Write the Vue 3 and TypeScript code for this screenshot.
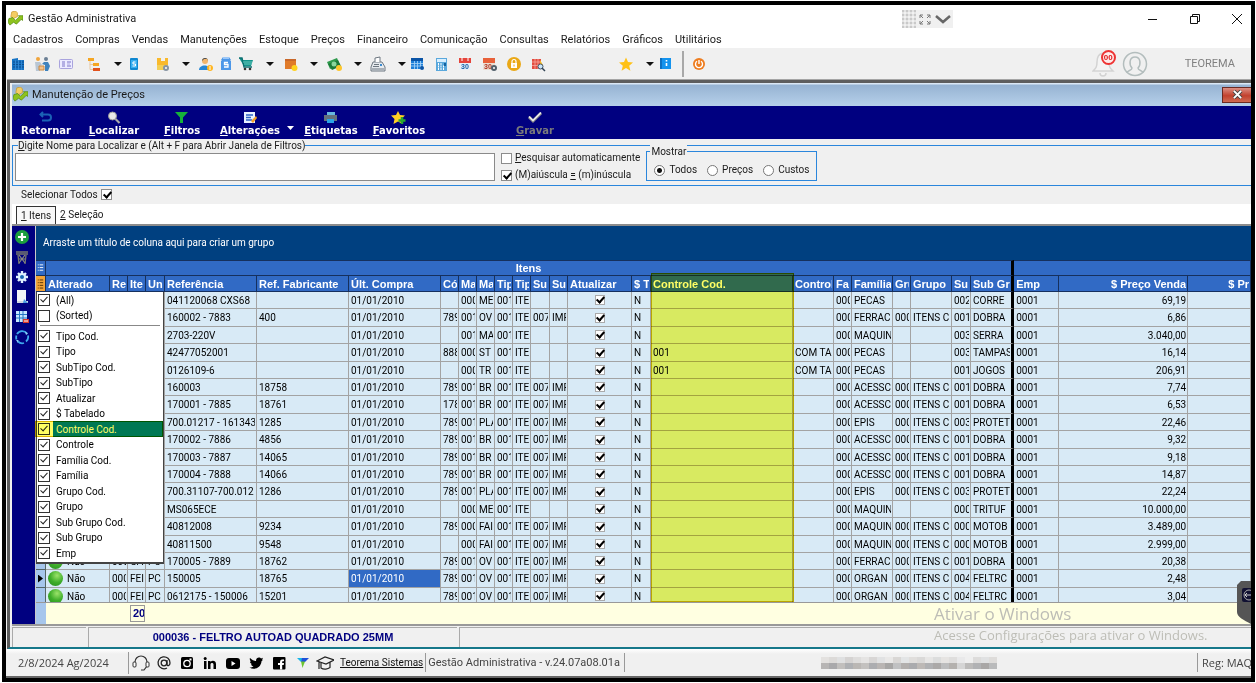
<script setup lang="ts">
import { ref } from 'vue'

interface Tool { label: string; gap: 'a' | 'b' | 'c' | 'far'; kind?: 'arrow' | 'sep'; art?: string }
interface Column { key: string; title: string; width: number; type?: 'check' | 'state' | 'mark' | 'right' }

const menus = ['Cadastros', 'Compras', 'Vendas', 'Manutenções', 'Estoque', 'Preços', 'Financeiro', 'Comunicação', 'Consultas', 'Relatórios', 'Gráficos', 'Utilitários']

const arrow = (label: string, gap: Tool['gap']): Tool => ({ label, gap, kind: 'arrow' })

const tools: Tool[] = [
  { label: 'Empresas', gap: 'a', art: '<path d="M2 3l6-1v2h6v10H2z" fill="#1673c4"/><path d="M3 6h11M3 8.500h11M3 11h11" stroke="#0b4f93"/><path d="M5.500 4v10M8.500 4v10M11.500 4v10" stroke="#2f86d2"/>' },
  { label: 'Clientes', gap: 'b', art: '<circle cx="4" cy="3" r="2" fill="#f0a43c"/><circle cx="12" cy="3" r="2" fill="#6b7f94"/><path d="M1 6h5l2 3-2 1v5H2z" fill="#b9c6d3"/><path d="M10 6h4l2 4-2 5h-3V9L8 8z" fill="#3f83bd"/><path d="M5 10h5v4H5z" fill="#f5c188" stroke="#c98a45"/>' },
  { label: 'Cartões', gap: 'b', art: '<rect x="1.500" y="3.500" width="13" height="9" rx="1" fill="#ecebff" stroke="#a9a3dd"/><path d="M4 6h3M4 8h3M4 10h3M9 6h4M9 10h4" stroke="#7a72c7"/><path d="M9 8h3" stroke="#a9a3dd"/>' },
  { label: 'Categorias', gap: 'c', art: '<path d="M2 2h6v3H2z" fill="#f5a623"/><path d="M7 7h6v3H7z" fill="#f5a623"/><path d="M7 12h7v3H7z" fill="#e2521d"/><path d="M4 5v3.500h3M4 8v5.500h3" fill="none" stroke="#e9c9a0"/>' },
  arrow('Mais categorias', 'c'),
  { label: 'Pagamento', gap: 'a', art: '<rect x="4" y="2" width="8" height="12" rx="1" fill="#0f87d0"/><rect x="5" y="4" width="6" height="8" fill="#36aef0"/><path d="M9.500 6H7v2h2.500v2H6.500" fill="none" stroke="#fff"/>' },
  { label: 'Produtos', gap: 'c', art: '<path d="M3 2h4v3h4V2h3v9H3z" fill="#f9b92c"/><path d="M3 9h11v5H3z" fill="#f3cf55"/><circle cx="12" cy="12" r="3" fill="#8795a3"/><circle cx="12" cy="12" r="1" fill="#fff"/>' },
  arrow('Mais produtos', 'c'),
  { label: 'Vendedor', gap: 'b', art: '<circle cx="7" cy="5" r="3" fill="#f2b56b"/><path d="M4 5c0-4 6-4 6 0L9 3H6z" fill="#3b4754"/><path d="M1 14c0-6 11-6 11 0z" fill="#2787d5"/><circle cx="12" cy="12" r="3" fill="#ffb51f"/><path d="M12 10v4" stroke="#fff"/>' },
  { label: 'Contas', gap: 'a', art: '<path d="M5 1h6l2 3-1 1h1v9H3V5h1L3 4z" fill="#4c97e8"/><path d="M5 1h6v2H5z" fill="#9cc7f7"/><path d="M10 6.500H6.500v2H10v2.500H6" fill="none" stroke="#fff" stroke-width="1.300"/>' },
  { label: 'Carrinho', gap: 'a', art: '<path d="M1 2h3l1 2h10l-2 6H6z" fill="#12948b"/><path d="M1 2h3l2 9h8" fill="none" stroke="#0b6e70" stroke-width="1.400"/><path d="M5 6h9M6 8h8" stroke="#68c7bd"/><circle cx="7" cy="13" r="1.300" fill="#333"/><circle cx="12" cy="13" r="1.300" fill="#333"/>' },
  arrow('Mais vendas', 'c'),
  { label: 'Estoque', gap: 'b', art: '<path d="M3 3h11v10H3z" fill="#e07b2a"/><path d="M3 3h11v2H3z" fill="#c9682a"/><circle cx="12.500" cy="12" r="3" fill="#ffd21f"/>' },
  arrow('Mais estoque', 'c'),
  { label: 'Financeiro', gap: 'b', art: '<path d="M1 6l10-4 3 7-10 4z" fill="#2f9a4d"/><path d="M2 8l10-4 3 6-9 4z" fill="#1d7a39"/><circle cx="8" cy="8" r="2.500" fill="#8bd69d"/><circle cx="13" cy="12" r="3" fill="#ffc62b"/>' },
  arrow('Mais financeiro', 'c'),
  { label: 'Caixa', gap: 'b', art: '<path d="M3 6h9l3 5v4H1v-4z" fill="#e6eaee" stroke="#6d7780"/><path d="M5 6V2l5-1v5" fill="#fff" stroke="#6d7780"/><path d="M4 8.500h5M3 10.500h6M2 13h12" stroke="#6d7780"/><path d="M10 8h2v2h-2z" fill="#3b8bd0"/>' },
  arrow('Mais caixa', 'c'),
  { label: 'Tabela', gap: 'a', art: '<path d="M1 3h12v10H1z" fill="#1e7fd8"/><path d="M1 2h12v3H1z" fill="#0a54a6"/><path d="M1 7.500h12M1 10h12M4.500 5v8M7.500 5v8M10.500 5v8" stroke="#a9d4f8" stroke-width=".8"/><circle cx="12" cy="12" r="2" fill="#0a54a6"/>' },
  { label: 'Calculadora', gap: 'b', art: '<path d="M2 2h11v13H2z" fill="#5aa8dc"/><path d="M3 3h9v3H3z" fill="#d9efff"/><path d="M4 8h1M6.500 8h1M4 10.500h1M6.500 10.500h1M4 13h1M6.500 13h1M9 10.500h1M9 13h1" stroke="#fff" stroke-width="1.800"/><path d="M10 7h2v3h-2z" fill="#15629f"/>' },
  { label: 'Agenda', gap: 'b', art: '<path d="M1 2h12v12H1z" fill="#e8f0f7"/><path d="M1 2h12v5H1z" fill="#e5443a"/><path d="M4 1v4M10 1v4" stroke="#fff"/><text x="7" y="13" text-anchor="middle" font-family="Liberation Sans" font-weight="700" font-size="7" fill="#1561a8">30</text>' },
  { label: 'Configurar agenda', gap: 'b', art: '<path d="M1 2h12v12H1z" fill="#eadfd4"/><path d="M1 2h12v5H1z" fill="#e8613a"/><text x="6" y="13" text-anchor="middle" font-family="Liberation Sans" font-weight="700" font-size="7" fill="#b33420">30</text><circle cx="12" cy="12" r="3" fill="#52606b"/><circle cx="12" cy="12" r="1" fill="#fff"/>' },
  { label: 'Bloquear', gap: 'b', art: '<circle cx="8" cy="8" r="7" fill="#eaa817"/><path d="M5 7h6v5H5z" fill="#fff"/><path d="M6 7V5.500a2 2 0 0 1 4 0V7" fill="none" stroke="#fff" stroke-width="1.200"/><path d="M8 8.500v2" stroke="#eaa817"/>' },
  { label: 'Pesquisar', gap: 'b', art: '<path d="M2 3h9v10H2z" fill="#e34b3f"/><path d="M2 6h9M2 9.500h9M5 3v10M8 3v10" stroke="#f4a79f" stroke-width=".8"/><path d="M10 4l3 5h-3z" fill="#f8bc20"/><circle cx="10.500" cy="10.500" r="2.500" fill="#c9e4f7" stroke="#456"/><path d="M12 12l3 3" stroke="#345" stroke-width="1.500"/>' },
  { label: 'Favoritos', gap: 'far', art: '<path d="M8 1.500l2 4.500 5 .5-3.800 3.300 1.200 4.900L8 12l-4.400 2.700 1.200-4.900L1 6.500 6 6z" fill="#ffc114"/>' },
  arrow('Mais favoritos', 'c'),
  { label: 'Informações', gap: 'a', art: '<path d="M2 2h11v11H2z" fill="#1493ee"/><path d="M2 2h2v11H2z" fill="#0d6fc1"/><path d="M8.500 4v1.500M8.500 7v3" stroke="#fff" stroke-width="1.600"/>' },
  { label: '', gap: 'b', kind: 'sep' },
  { label: 'Sair', gap: 'b', art: '<circle cx="7" cy="8" r="6" fill="#ee7d20"/><path d="M5 5.300a3.500 3.500 0 1 0 4 0M7 4v4" fill="none" stroke="#fff" stroke-width="1.400"/>' },
]

const actions = [
  { first: 'R', rest: 'etornar', plain: true, art: '<path d="M3 3.500h7a3 3 0 0 1 0 6H4M5 1L2.500 3.500 5 6" fill="none" stroke="#1b62b5" stroke-width="2"/>' },
  { first: 'L', rest: 'ocalizar', art: '<circle cx="6.500" cy="5" r="4" fill="#e8e8e8" stroke="#9a9a9a"/><path d="M9.500 8l4 4" stroke="#aaa" stroke-width="2.200"/>' },
  { first: 'F', rest: 'iltros', art: '<path d="M1 1h13L9 6.500V12H6V6.500z" fill="#16b13a"/>' },
  { first: 'A', rest: 'lterações', art: '<path d="M2 1h11v11H2z" fill="#e9f2ff"/><path d="M4 4h7M4 6.500h5M4 9h6" stroke="#2d63c5" stroke-width="1.400"/><path d="M9 10l5-5 1 2-4 5z" fill="#f4a028"/>' },
  { first: 'E', rest: 'tiquetas', art: '<path d="M4 1h8v3H4z" fill="#67b7df"/><path d="M1 4h13v6H1z" fill="#65717d"/><path d="M4 8h7v4H4z" fill="#2aa3e8"/>' },
  { first: 'F', rest: 'avoritos', art: '<path d="M7 0l2 4 5 .5-3.500 3.300L11.500 13 7 10.500 2.500 13l1-5L0 4.500 5 4z" fill="#ffcf24"/><path d="M11 6v7M7.500 9.500h7" stroke="#28a82e" stroke-width="2.500"/>' },
  { first: 'G', rest: 'ravar', off: true, art: '<path d="M2 6l4 4 8-8" fill="none" stroke="#8c8c8c" stroke-width="3"/><path d="M2 5.500l4 4 8-8" fill="none" stroke="#f2f2f2" stroke-width="1.500"/>' },
]

const sideTools = [
  { label: 'Adicionar', art: '<circle cx="8" cy="8" r="7" fill="#1c9d3e"/><path d="M8 4v8M4 8h8" stroke="#fff" stroke-width="2.200"/>' },
  { label: 'Excluir', art: '<path d="M2 3h12M2 5h12M4 6l1 9M12 6l-1 9" fill="none" stroke="#77786e" stroke-width="1.300"/><path d="M5 6l6 8M11 6l-6 8M5 10h6" stroke="#8b8c80" stroke-width="1.200"/>' },
  { label: 'Configurar', art: '<path d="M8 2v12M2 8h12M4 4l8 8M12 4l-8 8" stroke="#dff1ff" stroke-width="2.400"/><circle cx="8" cy="8" r="4" fill="#dff1ff"/><circle cx="8" cy="8" r="2" fill="#1767b5"/>' },
  { label: 'Documento', art: '<path d="M3 1h9v13H3z" fill="#f2f4f6"/><path d="M3 12h11v2H3z" fill="#cfd8df"/><path d="M10 10l4 4h-5z" fill="#4b9be0"/>' },
  { label: 'Remover coluna', art: '<path d="M2 2h11v11H2z" fill="#c8e7ff"/><path d="M2 5.500h11M2 9h11M5.500 2v11M9 2v11" stroke="#2777c4"/><path d="M9 10h6v4H9z" fill="#d83a2c"/><path d="M10 12h4" stroke="#fff"/>' },
  { label: 'Atualizar', art: '<path d="M3 5a6 6 0 0 1 10-.5M14 6.500a6 6 0 0 1-2 6M10 14a6 6 0 0 1-6-1.500M2.500 10.500a6 6 0 0 1 0-4" fill="none" stroke="#3fa9ec" stroke-width="1.800"/><path d="M11 2.500l3 2-2 1.500zM2 11l2.500 0-.5 3z" fill="#8fd0f7"/>' },
]

const columns: Column[] = [
  { key: 'state', title: 'Alterado', width: 64, type: 'state' },
  { key: 're', title: 'Re', width: 18 },
  { key: 'ite', title: 'Ite', width: 18 },
  { key: 'un', title: 'Un', width: 19 },
  { key: 'ref', title: 'Referência', width: 92 },
  { key: 'fab', title: 'Ref. Fabricante', width: 92 },
  { key: 'date', title: 'Últ. Compra', width: 92 },
  { key: 'cod', title: 'Có', width: 18 },
  { key: 'ma', title: 'Ma', width: 18 },
  { key: 'ma2', title: 'Ma', width: 18 },
  { key: 'ti', title: 'Tip', width: 18 },
  { key: 'ti2', title: 'Tip', width: 18 },
  { key: 'st', title: 'Su', width: 19 },
  { key: 'st2', title: 'Su', width: 18 },
  { key: 'upd', title: 'Atualizar', width: 64, type: 'check' },
  { key: 'tab', title: '$ T', width: 19 },
  { key: 'cc', title: 'Controle Cod.', width: 142 },
  { key: 'ctl', title: 'Control', width: 41 },
  { key: 'fc', title: 'Fa', width: 18 },
  { key: 'fam', title: 'Família', width: 41 },
  { key: 'gc', title: 'Gru', width: 18 },
  { key: 'grp', title: 'Grupo', width: 41 },
  { key: 'sg', title: 'Su', width: 19 },
  { key: 'sub', title: 'Sub Gr', width: 43, type: 'mark' },
  { key: 'emp', title: 'Emp', width: 45 },
  { key: 'price', title: '$ Preço Venda', width: 129, type: 'right' },
]

const order = ['ref', 'fab', 'cod', 'ma', 'ma2', 'st', 'st2', 'cc', 'ctl', 'fam', 'gc', 'grp', 'sg', 'sub', 'price']
const source = [
  '041120068 CXS68|||000|ME|||||PECAS|||002|CORRE|69,19',
  '160002 - 7883|400|789|001|OV|007|IMP|||FERRAC|000|ITENS C|001|DOBRA|6,86',
  '2703-220V|||001|MA|||||MAQUIN|||003|SERRA|3.040,00',
  '42477052001||888|000|ST|||001|COM TA|PECAS|||003|TAMPAS|16,14',
  '0126109-6|||000|TR|||001|COM TA|PECAS|||001|JOGOS|206,91',
  '160003|18758|789|001|BR|007|IMP|||ACESSC|000|ITENS C|001|DOBRA|7,74',
  '170001 - 7885|18761|178|001|BR|007|IMP|||ACESSC|000|ITENS C|001|DOBRA|6,53',
  '700.01217 - 161343|1285|789|001|PLA|007|IMP|||EPIS|000|ITENS C|003|PROTET|22,46',
  '170002 - 7886|4856|789|001|BR|007|IMP|||ACESSC|000|ITENS C|001|DOBRA|9,32',
  '170003 - 7887|14065|789|001|BR|007|IMP|||ACESSC|000|ITENS C|001|DOBRA|9,18',
  '170004 - 7888|14066|789|001|BR|007|IMP|||ACESSC|000|ITENS C|001|DOBRA|14,87',
  '700.31107-700.012|1286|789|001|PLA|007|IMP|||EPIS|000|ITENS C|003|PROTET|22,24',
  'MS065ECE|||000|ME|||||MAQUIN|||000|TRITUF|10.000,00',
  '40812008|9234|789|000|FAI|007|IMP|||MAQUIN|000|ITENS C|000|MOTOB|3.489,00',
  '40811500|9548||000|FAI|007|IMP|||MAQUIN|000|ITENS C|000|MOTOB|2.999,00',
  '170005 - 7889|18762|789|001|OV|007|IMP|||FERRAC|000|ITENS C|001|DOBRA|20,38',
  '150005|18765|789|001|OV|007|IMP|||ORGAN|000|ITENS C|004|FELTRC|2,48',
  '0612175 - 150006|15201|789|001|OV|007|IMP|||ORGAN|000|ITENS C|004|FELTRC|3,04',
]
const rows = source.map((line, i) => {
  const row: Record<string, string> = { date: '01/01/2010', ti: '001', ti2: 'ITE', tab: 'N', fc: '000', emp: '0001' }
  line.split('|').forEach((v, n) => { row[order[n]] = v })
  if (i > 14) Object.assign(row, { state: 'Não', re: '000', ite: i === 15 ? 'GAI' : 'FEI', un: 'PC' })
  return row
})
const current = 16

const fields = ref([
  { name: '(All)', on: true }, { name: '(Sorted)', on: false },
  ...['Tipo Cod.', 'Tipo', 'SubTipo Cod.', 'SubTipo', 'Atualizar', '$ Tabelado', 'Controle Cod.', 'Controle', 'Família Cod.', 'Família', 'Grupo Cod.', 'Grupo', 'Sub Grupo Cod.', 'Sub Grupo', 'Emp'].map(name => ({ name, on: true })),
])

const search = ref('')
const auto = ref(false)
const caseless = ref(true)
const show = ref('Todos')
const all = ref(true)

const social = [
  { label: 'Suporte', art: '<path d="M3 8a6 6 0 0 1 12 0M3 8v5M15 8v4l-3 4H9" fill="none" stroke="#333" stroke-width="1.200"/><rect x="1" y="8" width="3" height="5" rx="1" fill="#fff" stroke="#333"/><rect x="14" y="8" width="3" height="5" rx="1" fill="#fff" stroke="#333"/>' },
  { label: 'E-mail', art: '<circle cx="9" cy="9" r="2.800" fill="none" stroke="#222" stroke-width="1.300"/><path d="M12 6v4.500c0 2 3 1.500 3-1.500a6 6 0 1 0-3 5" fill="none" stroke="#222" stroke-width="1.300"/>' },
  { label: 'Instagram', art: '<rect x="3" y="3" width="12" height="12" rx="1.500"/><circle cx="9" cy="9.500" r="3.200" fill="none" stroke="#fff" stroke-width="1.300"/><path d="M11.500 4.500h2v2h-2z" fill="#fff"/>' },
  { label: 'LinkedIn', art: '<circle cx="4.200" cy="4.500" r="1.500"/><path d="M3 7h2.500v8H3zM7 7h2.500v1c1.500-2 5.500-1.500 5.500 2v5h-2.500v-4.500c0-2-3-2-3 0V15H7z"/>' },
  { label: 'YouTube', art: '<rect x="2" y="4" width="14" height="11" rx="3"/><path d="M7.500 7v5l4-2.500z" fill="#fff"/>' },
  { label: 'Twitter', art: '<path d="M3 4c2 2 4 3 6 3 0-4 4-4 5-2.500l2-.7-1 2 1 0-1.500 1.500C14 14 7 16.500 2.500 13.500c2 0 3-.5 4-1.300-1.500-.2-2.300-1-2.500-2h1C3.500 9.500 3 8.500 3 7.500l1 .2C2.700 6.500 2.500 5 3 4z"/>' },
  { label: 'Facebook', art: '<rect x="3" y="3" width="12.500" height="12.500" rx="1"/><path d="M10 15.500V11H8V9h2c0-3 .5-4 4-3.500v1.700c-1.500 0-2-.2-1.800 1.800H14l-.3 2h-1.500v4.500z" fill="#fff"/>' },
  { label: 'Teorema', art: '<path d="M4 4h6L8 8z" fill="#19b5e8"/><path d="M9 4h7l-4 4H8z" fill="#1e50d8"/><path d="M8 7.500h4L9.500 14z" fill="#6ac52e"/>' },
  { label: 'Cursos', art: '<path d="M1 7l8-4 9 3-8 4zM5 9v5c3 2 7 1 9-.5V8.500M3 8v7" fill="none" stroke="#222" stroke-width="1.200"/>' },
]

const mosaic = ['#e3e1df', '#dcdad8', '#dfe0e1', '#d5d3d2', '#dedddc', '#e5e4e3', '#d8d6d5', '#e1e2e3', '#e9e8e7', '#d9d7d5', '#e3e5e6', '#e0dedc', '#dad9d8', '#e7e6e5', '#dcdddd', '#e6e4e2', '#dfdedd', '#e9e9ea', '#efefef', '#dddcdb', '#e0e1e2', '#dedcda',
  '#b7b5b4', '#a9a9ab', '#c1bfbd', '#aeb0b3', '#bab7b4', '#c3c1bf', '#acadb0', '#b9b5b3', '#a7a6a5', '#c0c1c2', '#b2afad', '#aaabae', '#bdb9b6', '#b0b1b3', '#aba9a8', '#bcbdbe', '#b4b1ae', '#d5d5d5', '#bcbbba', '#b1b2b4', '#a9a7a6', '#b9babb']
</script>

<template>
  <div class="screen">
    <header class="titlebar">
      <svg class="logo" viewBox="0 0 16 16"><path d="M4 1l4-1 2 2v4L6 8 3 6z" fill="#f4cd63" stroke="#c99a2c" stroke-width=".8" /><path d="M1 8l4-1 3 3 4-4-1-1 5 0v5l-2-1-5 5-3-2-4 3-2-3z" fill="#8fc31e" stroke="#578e12" stroke-width=".8" /></svg>
      <span class="apptitle">Gestão Administrativa</span>
      <div class="pill">
        <svg viewBox="0 0 51 18"><path d="M0 0h14v18H0z" fill="#c9c9c9" /><path d="M3 0v18M7 0v18M11 0v18M0 3h14M0 7h14M0 11h14M0 15h14" stroke="#fff" /><path d="M18 8V5h3M25 5h3v3M28 11v3h-3M21 14h-3v-3M18 5l3 3M28 5l-3 3M28 14l-3-3M18 14l3-3" fill="none" stroke="#777" /><path d="M34 6l7 6 7-6" fill="none" stroke="#666" stroke-width="2.500" /></svg>
      </div>
      <div class="winbtns">
        <button aria-label="Minimizar"><svg viewBox="0 0 12 12"><path d="M1 6.500h9" stroke="#111" /></svg></button>
        <button aria-label="Restaurar"><svg viewBox="0 0 12 12"><path d="M1.500 3.500h7v7h-7zM3.500 3V1.500h7v7H9" fill="none" stroke="#111" /></svg></button>
        <button aria-label="Fechar"><svg viewBox="0 0 12 12"><path d="M1 1l10 10M11 1L1 11" stroke="#111" /></svg></button>
      </div>
    </header>
    <nav class="menubar"><a v-for="m in menus" :key="m" href="#">{{ m }}</a></nav>
    <div class="toolbar">
      <template v-for="(t, i) in tools" :key="i">
        <span v-if="t.kind === 'sep'" class="tsep" :class="'g-' + t.gap"></span>
        <button v-else-if="t.kind === 'arrow'" class="tarrow" :class="'g-' + t.gap" :aria-label="t.label"></button>
        <button v-else class="tool" :class="'g-' + t.gap" :aria-label="t.label"><svg viewBox="0 0 16 16" v-html="t.art"></svg></button>
      </template>
      <div class="user">
        <button class="bell" aria-label="Notificações">
          <svg viewBox="0 0 24 28"><path d="M11 3c-5 1-6 5-6 9 0 5-1 6-4 9h20c-3-3-4-4-4-9 0-4-1-8-6-9zM8 23c0 4 6 4 6 0" fill="#f4f4f4" stroke="#d3d3d3" stroke-width="1.500" /></svg>
          <span class="badge">00</span>
        </button>
        <svg class="avatar" viewBox="0 0 26 26"><circle cx="13" cy="13" r="11.500" fill="none" stroke="#b3bdbd" stroke-width="1.500" /><path d="M5 22c0-3 5-2 5-5-3-3-3-11 3-11s6 8 3 11c0 3 5 2 5 5" fill="none" stroke="#b3bdbd" stroke-width="1.500" /></svg>
        <span class="uname">TEOREMA</span>
      </div>
    </div>

    <main class="mdi">
      <div class="childbar">
        <svg class="logo" viewBox="0 0 16 16"><path d="M4 1l4-1 2 2v4L6 8 3 6z" fill="#f4cd63" stroke="#c99a2c" stroke-width=".8" /><path d="M1 8l4-1 3 3 4-4-1-1 5 0v5l-2-1-5 5-3-2-4 3-2-3z" fill="#8fc31e" stroke="#578e12" stroke-width=".8" /></svg>
        <span>Manutenção de Preços</span>
        <button class="close" aria-label="Fechar janela"><svg viewBox="0 0 12 10"><path d="M2 1l8 8M10 1L2 9" stroke="#444" stroke-width="4" /><path d="M2 1l8 8M10 1L2 9" stroke="#fff" stroke-width="2.200" /></svg></button>
      </div>
      <div class="actions">
        <template v-for="(a, i) in actions" :key="i">
          <button class="act" :class="{ off: a.off }" :disabled="a.off">
            <svg viewBox="0 0 16 13" v-html="a.art"></svg>
            <span><u v-if="!a.plain">{{ a.first }}</u><template v-else>{{ a.first }}</template>{{ a.rest }}</span>
          </button>
          <button v-if="i === 3" class="drop" aria-label="Mais alterações"></button>
        </template>
      </div>

      <section class="search">
        <label class="legend" for="q"><u>D</u>igite Nome para Localizar e (Alt + F para Abrir Janela de Filtros)</label>
        <input id="q" v-model="search" class="query" type="text">
        <div class="opts">
          <label><input v-model="auto" type="checkbox" class="ck"><span><u>P</u>esquisar automaticamente</span></label>
          <label><input v-model="caseless" type="checkbox" class="ck"><span>(M)aiúscula <u>=</u> (m)inúscula</span></label>
        </div>
        <fieldset class="show">
          <legend>Mostrar</legend>
          <label v-for="o in ['Todos', 'Preços', 'Custos']" :key="o"><input v-model="show" type="radio" name="show" :value="o">{{ o }}</label>
        </fieldset>
      </section>

      <div class="selall"><label>Selecionar Todos<input v-model="all" type="checkbox" class="ck"></label></div>
      <div class="tabs"><button class="tab on"><u>1</u> Itens</button><button class="tab"><u>2</u> Seleção</button></div>

      <div class="work">
        <aside class="side"><button v-for="s in sideTools" :key="s.label" :aria-label="s.label"><svg viewBox="0 0 16 16" v-html="s.art"></svg></button></aside>
        <div class="grid">
          <div class="groupby">Arraste um título de coluna aqui para criar um grupo</div>
          <div class="sheet">
            <div class="clip">
              <table>
                <colgroup><col class="c-ind"><col v-for="c in columns" :key="c.key" :style="{ width: c.width + 'px' }"><col></colgroup>
                <thead>
                  <tr class="band">
                    <th class="ind"><svg viewBox="0 0 10 14"><path d="M2 3.500h1M4 3.500h4M2 6.500h1M4 6.500h4M2 9.500h1M4 9.500h4" stroke="#fff" /></svg></th>
                    <th colspan="24" class="mark">Itens</th>
                    <th colspan="3"></th>
                  </tr>
                  <tr>
                    <th class="ind hot"><svg viewBox="0 0 10 14"><path d="M2 2.500h1M4 2.500h4M2 5.500h1M4 5.500h4M2 8.500h1M4 8.500h4M2 11.500h1M4 11.500h4" stroke="#4d2c00" /></svg></th>
                    <th v-for="c in columns" :key="c.key" :class="c.type"><div>{{ c.title }}</div></th>
                    <th class="right"><div>$ Pr</div></th>
                  </tr>
                </thead>
                <tbody>
                  <tr v-for="(r, i) in rows" :key="i">
                    <td class="ind"><i v-if="i === current" class="ptr"></i></td>
                    <td v-for="c in columns" :key="c.key" :class="[c.type, { sel: i === current && c.key === 'date' }]">
                      <input v-if="c.type === 'check'" type="checkbox" class="ck" checked :aria-label="'Atualizar ' + r.ref">
                      <div v-else><i v-if="c.type === 'state' && r.state" class="ball"></i>{{ r[c.key] }}</div>
                    </td>
                    <td></td>
                  </tr>
                </tbody>
              </table>
            </div>
            <div class="glow"></div>
            <div class="picker">
              <template v-for="(f, i) in fields" :key="f.name">
                <label :class="{ hit: f.name === 'Controle Cod.' }"><input v-model="f.on" type="checkbox">{{ f.name }}</label>
                <hr v-if="i === 1">
              </template>
            </div>
          </div>
          <div class="totals"><span class="tind"></span><span class="count">20</span></div>
        </div>
      </div>
      <div class="record"><span class="p1"></span><span class="p2">000036 - FELTRO AUTOAD QUADRADO 25MM</span><span class="p3"></span></div>
      <div class="water"><strong>Ativar o Windows</strong><span>Acesse Configurações para ativar o Windows.</span></div>
      <button class="remote" aria-label="Acesso remoto"><svg viewBox="0 0 14 43"><path d="M14 0H4L0 4v27c0 5 7 8 14 12z" fill="#555" /><rect x="5" y="7" width="12" height="14" rx="2" fill="#111132" /><circle cx="12" cy="14" r="5" fill="none" stroke="#aaa" /><path d="M8 14h6M10 12l-2 2 2 2" fill="none" stroke="#ccc" /></svg></button>
    </main>

    <footer class="status">
      <span class="date">2/8/2024 Ag/2024</span>
      <div class="social"><a v-for="s in social" :key="s.label" href="#" :aria-label="s.label"><svg viewBox="0 0 18 18" v-html="s.art"></svg></a></div>
      <a class="site" href="#">Teorema Sistemas</a>
      <span class="ver">Gestão Administrativa - v.24.07a08.01a</span>
      <div class="mosaic"><i v-for="(m, i) in mosaic" :key="i" :style="{ background: m }"></i></div>
      <span class="reg">Reg: MAQ</span>
    </footer>
  </div>
</template>

<style>
body { margin: 0; overflow: hidden; background: #fff; }
</style>

<style scoped>
* { box-sizing: border-box; }
button { border: 0; padding: 0; margin: 0; background: none; font: inherit; color: inherit; }
a { color: inherit; text-decoration: none; }
svg { display: block; }
.screen { display: flex; flex-direction: column; height: calc(100vh - 2px); margin: 1px 1px 1px 2px; border: 4px solid #000; background: #f0f0f0; overflow: hidden; font: 11px/14px Roboto, sans-serif; color: #1a1a1a; }

.titlebar { display: flex; align-items: center; height: 27px; background: #fff; padding-left: 2px; flex: none; }
.logo { width: 15px; height: 15px; flex: none; }
.apptitle { margin-left: 5px; flex: 1; }
.pill { width: 51px; height: 18px; background: #f0f0f0; margin-right: 194px; }
.winbtns { display: flex; gap: 30px; padding-right: 8px; }
.winbtns svg { width: 12px; height: 12px; }
.menubar { display: flex; gap: 12px; height: 16px; padding-left: 7px; background: #fff; align-items: center; flex: none; }

.toolbar { display: flex; align-items: center; height: 32px; background: #f0f0f0; flex: none; }
.tool { width: 16px; height: 16px; flex: none; }
.tool svg { width: 16px; height: 16px; }
.tarrow { width: 8px; height: 4px; flex: none; background: #111; clip-path: polygon(0 0, 100% 0, 50% 100%); }
.tsep { width: 2px; height: 26px; background: #a8a8a8; flex: none; }
.g-a { margin-left: 4px; }
.g-b { margin-left: 8px; }
.g-c { margin-left: 12px; }
.g-far { margin-left: 72px; }
.user { margin-left: auto; display: flex; align-items: center; padding-right: 16px; color: #808080; }
.bell { position: relative; width: 24px; height: 28px; }
.badge { position: absolute; right: 0; top: 0; width: 15px; height: 15px; border: 2px solid #e33; border-radius: 50%; background: #fdeaea; color: #e01818; font: bold 8px/11px "Liberation Sans", sans-serif; text-align: center; }
.avatar { width: 26px; height: 26px; margin: 0 37px 0 6px; }

.mdi { position: relative; flex: 1; min-height: 0; display: flex; flex-direction: column; margin-left: 1px; border-top: 3px solid #5e5e5e; border-left: 3px solid #5a5a5a; padding-left: 2px; background: #f0f0f0; border-bottom: 2px solid #16788a; box-shadow: 0 -1px 0 #a5a5a5; }
.childbar { display: flex; align-items: center; height: 23px; background: linear-gradient(#dbe8f5 0 1px, #96b3d2 2px, #b6d0ea); flex: none; gap: 4px; padding-left: 1px; }
.childbar span { flex: 1; }
.close { width: 29px; height: 16px; background: linear-gradient(#dc8f83, #c2412e 55%, #cf6a52); border: 1px solid #6b2a22; border-right: 0; display: grid; place-items: center; }
.close svg { width: 11px; height: 9px; }
.actions { display: flex; height: 33px; background: #000080; color: #fff; font: bold 10px/12px "DejaVu Sans", sans-serif; flex: none; }
.act { display: flex; flex-direction: column; align-items: center; gap: 1px; width: 68px; padding-top: 5px; flex: none; }
.act svg { width: 16px; height: 13px; }
.off { margin-left: 68px; color: #7b7b7b; }
.drop { width: 7px; height: 4px; margin: 20px 3px 0; background: #fff; clip-path: polygon(0 0, 100% 0, 50% 100%); }

.search { position: relative; display: flex; align-items: flex-start; height: 41px; margin-top: 6px; border: 1px solid #2a86dc; border-right: 0; background: #f0f0f0; flex: none; font-size: 10px; }
.legend { position: absolute; left: 5px; top: -7px; background: #f0f0f0; line-height: 13px; }
.query { width: 480px; height: 28px; margin: 7px 0 0 2px; border: 1px solid #8a8a8a; background: #fff; flex: none; }
.opts { display: grid; gap: 3px; margin: 5px 0 0 6px; }
.opts label { display: flex; align-items: center; gap: 3px; height: 14px; }
.ck { appearance: none; width: 11px; height: 11px; margin: 0; border: 1px solid #8c8c8c; background: #fff; display: inline-block; position: relative; flex: none; }
.ck:checked::after { content: ""; position: absolute; left: 3px; top: 0; width: 3px; height: 6px; border: solid #000; border-width: 0 2px 2px 0; transform: rotate(42deg); }
.show { display: flex; align-items: center; position: relative; gap: 10px; width: 171px; height: 30px; margin: 5px 0 0 6px; padding: 8px 0 0 7px; border: 1px solid #2a86dc; }
.show legend { position: absolute; left: 3px; top: -7px; padding: 0 1px; background: #f0f0f0; line-height: 13px; }
.show label { display: flex; align-items: center; gap: 4px; }
.show input { appearance: none; width: 11px; height: 11px; margin: 0; border: 1px solid #777; border-radius: 50%; background: #fff; }
.show input:checked { background: radial-gradient(#111 0 2px, #fff 3px); }

.selall { height: 18px; padding-left: 9px; font-size: 10px; flex: none; }
.selall label { display: flex; align-items: center; gap: 3px; height: 17px; }
.tabs { display: flex; align-items: flex-end; height: 22px; padding-left: 4px; background: #fff; border-bottom: 2px solid #8c8c8c; font-size: 10px; flex: none; }
.tab { height: 18px; padding: 0 4px; }
.tab.on { border: 1px solid #333; border-bottom: 0; background: #f8f8f8; }

.work { display: flex; flex: 1; min-height: 0; border-bottom: 2px solid #999; }
.side { width: 23px; background: #000080; display: flex; flex-direction: column; align-items: flex-start; gap: 4px; padding: 3px 0 0 2px; flex: none; }
.side button, .side svg { width: 16px; height: 16px; }
.grid { flex: 1; min-width: 0; display: flex; flex-direction: column; border-left: 1px solid #c9c9c9; }
.groupby { height: 34px; padding: 10px 0 0 7px; background: #004080; color: #fff; font-size: 10px; flex: none; }
.sheet { position: relative; flex: 1; min-height: 0; }
.clip { height: 100%; overflow: hidden; }
table { width: 100%; table-layout: fixed; border-spacing: 0; font: 10px/15px Roboto, sans-serif; color: #000; }
.c-ind { width: 10px; }
th { height: 16px; padding: 0; background: #316ac5; color: #fff; font: bold 11px/14px "Liberation Sans", sans-serif; text-align: left; border: solid #16305e; border-width: 0 1px 1px 0; }
.band th { text-align: center; border-top: 1px solid #16305e; }
th div, td div { overflow: hidden; white-space: nowrap; margin: 0 1px 0 2px; }
th.right, td.right { text-align: right; }
th svg { width: 9px; height: 14px; }
th.hot { background: #f2a338; }
td { height: 17px; padding: 0; background: #d8eaf6; border: solid #a3a3a3; border-width: 0 1px 1px 0; }
tr:nth-child(5n+2) td, tr:nth-child(5n+4) td { height: 18px; }
td.ind { background: #a6c6ec; border-color: #566; }
td.check { text-align: center; }
td.check .ck { display: block; margin: 0 auto; width: 10px; height: 10px; border-color: #aaa; }
td.check .ck:checked::after { left: 2px; top: -1px; }
th.mark, td.mark { border-right: 3px solid #000; }
td.sel { background: #316ac5; color: #fff; }
td.state div { display: flex; align-items: center; gap: 4px; height: 16px; }
.ball { width: 15px; height: 15px; border-radius: 50%; background: radial-gradient(circle at 60% 30%, #9be36a, #3fae2a 50%, #258a1b); }
.ptr { display: block; width: 5px; height: 8px; margin-left: 2px; background: #000; clip-path: polygon(0 0, 100% 50%, 0 100%); }
.glow { position: absolute; left: 615px; top: 13px; bottom: 0; width: 143px; background: #ffff64; border: 1px solid #dcb400; mix-blend-mode: multiply; }
.picker { position: absolute; left: 0; top: 32px; width: 128px; padding-bottom: 1px; background: #fff; border: solid #444; border-width: 0 1px 2px 1px; font: 10px/15px Roboto, sans-serif; color: #000; }
.picker label { display: flex; align-items: center; gap: 6px; height: 16px; padding-left: 1px; position: relative; }
.picker label:nth-of-type(even) { height: 15px; }
.picker hr { height: 1px; margin: 2px 3px; border: 0; background: #888; }
.picker input { appearance: none; width: 12px; height: 12px; margin: 0; border: 1px solid #333; background: #fff; position: relative; }
.picker input:checked::after { content: ""; position: absolute; left: 3px; top: 0; width: 3px; height: 6px; border: solid #222; border-width: 0 1px 1px 0; transform: rotate(42deg); }
.picker .hit { background: linear-gradient(90deg, #fff 16px, #0078d7 16px); color: #fff; }
.picker .hit::after { content: ""; position: absolute; inset: 0 0 0 -2px; background: #ffff64; border: 1px solid #dcb400; mix-blend-mode: multiply; }
.totals { display: flex; align-items: center; height: 22px; background: #ffffe1; border-top: 1px solid #999; flex: none; }
.tind { width: 10px; height: 100%; background: #a6c6ec; }
.count { width: 15px; height: 17px; margin-left: 84px; border: 1px solid #999; padding-left: 2px; overflow: hidden; color: #000080; font: bold 11px/15px "Liberation Sans", sans-serif; }

.record { display: flex; gap: 2px; height: 21px; padding-top: 1px; flex: none; }
.record span { border: solid #aaa; border-width: 1px 0 0 1px; }
.p1 { width: 74px; }
.p2 { width: 369px; text-align: center; color: #000080; font: bold 11px/18px "Liberation Sans", sans-serif; }
.p3 { flex: 1; }
.water { position: absolute; left: 924px; bottom: 3px; display: flex; flex-direction: column; color: #bdbdb6; font: 13px/18px "Open Sans", sans-serif; pointer-events: none; }
.water strong { font: 17px/24px "Open Sans", sans-serif; }
.remote { position: absolute; right: 0; bottom: 23px; width: 14px; height: 43px; }

.status { display: flex; align-items: center; height: 29px; background: linear-gradient(#fff, #f0f0f0 5px); border-bottom: 2px solid #666; flex: none; font: 11px/14px "Open Sans", sans-serif; color: #444; white-space: nowrap; overflow: hidden; }
.date { width: 123px; padding-left: 12px; border-right: 1px solid #999; line-height: 22px; }
.social { display: flex; gap: 5px; padding-left: 3px; }
.social svg { width: 18px; height: 18px; }
.site { margin-left: 6px; text-decoration: underline; color: #111; font: 10px/20px Roboto, sans-serif; }
.ver { margin-left: 2px; padding: 0 4px 0 2px; border: solid #999; border-width: 0 1px; line-height: 19px; font-family: Roboto, sans-serif; }
.mosaic { display: grid; grid-template-columns: repeat(22, 8px); grid-auto-rows: 6px; margin-left: auto; }
.reg { width: 54px; margin-left: 200px; padding-left: 4px; border-left: 1px solid #999; line-height: 19px; overflow: hidden; flex: none; }
</style>
